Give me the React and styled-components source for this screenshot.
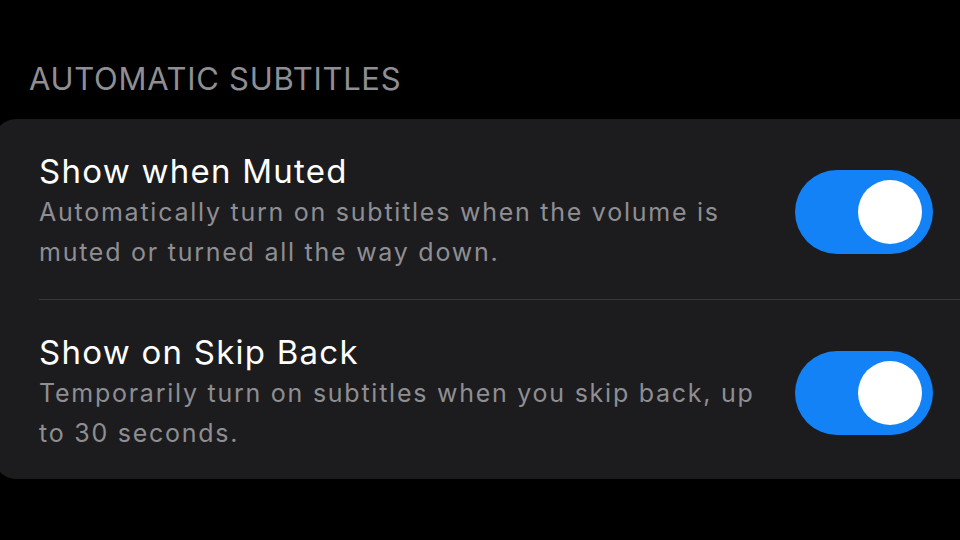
import React from "react";
import styled, { createGlobalStyle } from "styled-components";

const Global = createGlobalStyle`
  html, body { margin: 0; padding: 0; background: #000; }
  body { font-family: Inter, "Noto Sans", "Liberation Sans", sans-serif; -webkit-font-smoothing: antialiased; overflow: hidden; }
`;

const Page = styled.div`
  width: 960px;
  height: 540px;
  background: #000;
  overflow: hidden;
  padding-top: 60px;
  box-sizing: border-box;
`;

const SectionHeader = styled.div`
  font-size: 31px;
  line-height: 38px;
  color: #8e8e93;
  padding-left: 29px;
  margin-bottom: 21px;
  letter-spacing: 0.7px;
`;

const Card = styled.div`
  background: #1c1c1e;
  border-radius: 22px;
  margin-left: -6px;
  margin-right: -20px;
  padding-left: 45px;
`;

const Row = styled.div`
  display: flex;
  align-items: center;
  gap: 40px;
  padding: ${(p) => (p.$last ? "32px 47px 26px 0" : "32px 47px 27px 0")};
  border-bottom: ${(p) => (p.$last ? "none" : "1px solid #38383a")};
`;

const TextCol = styled.div`
  flex: 1;
  min-width: 0;
`;

const Title = styled.div`
  font-size: 33px;
  line-height: 40px;
  color: #fff;
  letter-spacing: 1.25px;
`;

const Desc = styled.div`
  margin-top: 1px;
  font-size: 25px;
  line-height: 40px;
  color: #8e8e93;
  letter-spacing: 1.75px;
`;

const Switch = styled.div`
  flex: none;
  width: 138px;
  height: 84px;
  border-radius: 42px;
  background: #1282f6;
  display: flex;
  align-items: center;
  justify-content: ${(p) => (p.$on ? "flex-end" : "flex-start")};
  padding: 0 11px;
  box-sizing: border-box;
`;

const Knob = styled.div`
  width: 64px;
  height: 64px;
  border-radius: 50%;
  background: #fff;
`;

const rows = [
  {
    title: "Show when Muted",
    desc: "Automatically turn on subtitles when the volume is muted or turned all the way down.",
  },
  {
    title: "Show on Skip Back",
    desc: "Temporarily turn on subtitles when you skip back, up to 30 seconds.",
  },
];

export default function App() {
  return (
    <Page>
      <Global />
      <SectionHeader>AUTOMATIC SUBTITLES</SectionHeader>
      <Card>
        {rows.map((r, i) => (
          <Row key={r.title} $last={i === rows.length - 1}>
            <TextCol>
              <Title>{r.title}</Title>
              <Desc>{r.desc}</Desc>
            </TextCol>
            <Switch $on>
              <Knob />
            </Switch>
          </Row>
        ))}
      </Card>
    </Page>
  );
}
